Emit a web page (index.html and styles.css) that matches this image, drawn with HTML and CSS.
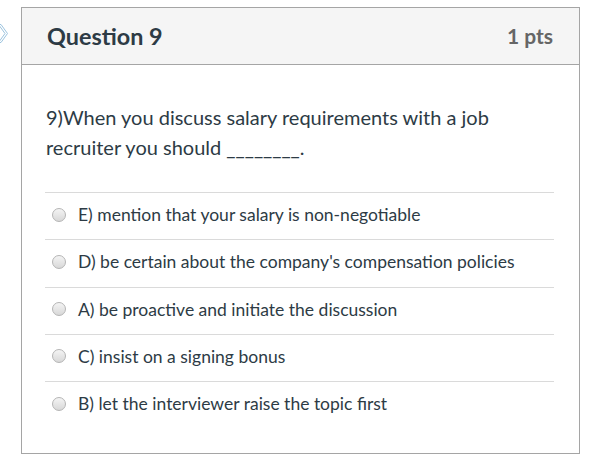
FILE: index.html
```html
<!DOCTYPE html>
<html>
<head>
<meta charset="utf-8">
<link rel="stylesheet" href="styles.css">
</head>
<body>
<div class="page">
  <svg class="flag" width="12" height="19" viewBox="0 0 12 19"><polygon points="0.5,0.5 3,0.5 9.5,9.5 3,18.5 0.5,18.5 7,9.5" fill="#fff" stroke="#9cc3de" stroke-width="1"/></svg>
  <div class="card">
    <div class="header">
      <h2 class="title">Question 9</h2>
      <span class="pts">1 pts</span>
    </div>
    <div class="body">
      <p class="question">9)When you discuss salary requirements with a job recruiter you should ________.</p>
      <ul class="answers">
        <li class="answer"><span class="radio"></span><span>E) mention that your salary is non-negotiable</span></li>
        <li class="answer"><span class="radio"></span><span>D) be certain about the company's compensation policies</span></li>
        <li class="answer"><span class="radio"></span><span>A) be proactive and initiate the discussion</span></li>
        <li class="answer"><span class="radio"></span><span>C) insist on a signing bonus</span></li>
        <li class="answer"><span class="radio"></span><span>B) let the interviewer raise the topic first</span></li>
      </ul>
    </div>
  </div>
</div>
</body>
</html>
```
FILE: styles.css
```css
* { box-sizing: border-box; }
html, body { margin: 0; padding: 0; background: #fff; }
body { font-family: Lato, "Open Sans", sans-serif; color: #2d3b45; }
.page { position: relative; padding: 7px 0 0 21px; }
.flag { position: absolute; left: -2px; top: 24px; }
.card { width: 559px; border: 1px solid #a5a5a5; }
.header {
  height: 57px;
  background: #f5f5f5;
  border-bottom: 1px solid #a5a5a5;
  display: flex;
  align-items: center;
  justify-content: space-between;
  padding: 0 26px 1px 25px;
}
.title { margin: 0; font-size: 23.4px; font-weight: 700; color: #2d3b45; }
.pts { font-size: 21px; font-weight: 700; color: #666; }
.body { padding: 37px 25px 25px 23px; }
.question { margin: 0 0 30px 1px; font-size: 20px; line-height: 30px; }
.answers { list-style: none; margin: 0; padding: 0; }
.answer {
  height: 47.25px;
  border-top: 1px solid #dadada;
  display: flex;
  align-items: center;
  padding: 0 0 3px 7px;
  font-size: 17.5px;
  color: #2d3b45;
}
.radio {
  width: 14px; height: 14px;
  border-radius: 50%;
  border: 1px solid #b5b5b5;
  background: linear-gradient(#f4f4f4, #d8d8d8);
  margin-right: 12px;
  flex: none;
}
```
